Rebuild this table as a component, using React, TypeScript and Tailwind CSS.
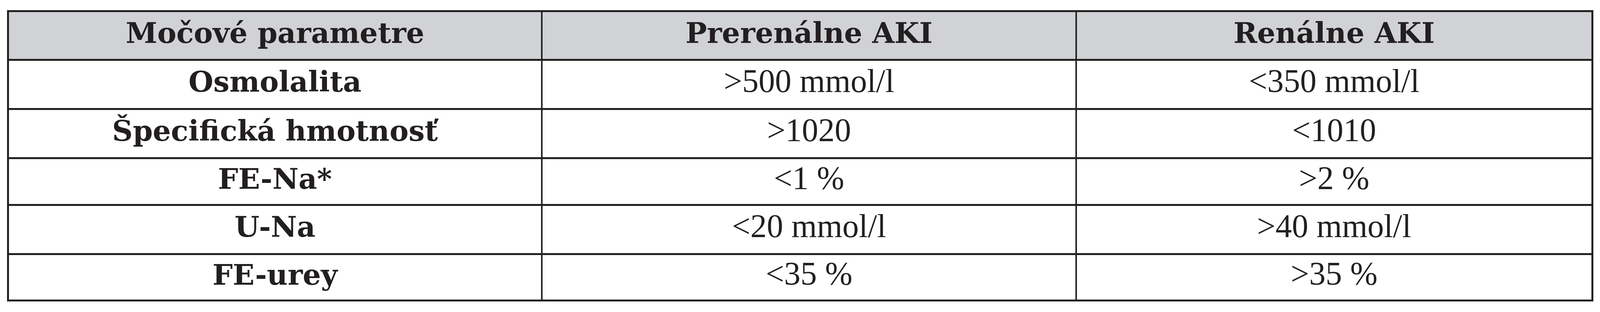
const headers = ['Močové parametre', 'Prerenálne AKI', 'Renálne AKI'];

// row heights include the 5px bottom rule (box-sizing: border-box)
const rows = [
  { name: 'Osmolalita', pre: '>500 mmol/l', ren: '<350 mmol/l', h: 'h-[126px]' },
  { name: 'Špecifická hmotnosť', pre: '>1020', ren: '<1010', h: 'h-[126px]' },
  { name: 'FE-Na*', pre: '<1 %', ren: '>2 %', h: 'h-[120px]' },
  { name: 'U-Na', pre: '<20 mmol/l', ren: '>40 mmol/l', h: 'h-[126px]' },
  { name: 'FE-urey', pre: '<35 %', ren: '>35 %', h: 'h-[114px]' },
];

// type scales with the page width so the table keeps its proportions
const boldCell =
  "flex items-center justify-center min-h-0 pb-[0.19em] font-bold leading-none whitespace-nowrap text-[1.785vw] font-['DejaVu_Serif',serif]";
const plainCell =
  "flex items-center justify-center min-h-0 pb-[0.21em] leading-none whitespace-nowrap text-[2.05vw] font-['Liberation_Serif',serif]";

export default function App() {
  return (
    <div className="w-full h-[800px] overflow-hidden bg-white pt-[26px] text-[#231f20]">
      <div className="ml-[0.43%] w-[99.15%] border-[5px] border-[#222222]">
        {/* Header */}
        <div className="grid grid-cols-[1646fr_1647fr_1586fr] grid-rows-[100%] h-[125px] border-b-[5px] border-[#222222] bg-[#d1d2d5]">
          {headers.map((h, i) => (
            <div
              key={h}
              className={`${boldCell} ${i < 2 ? 'border-r-4 border-[#222222]' : ''}`}
            >
              {h}
            </div>
          ))}
        </div>

        {/* Body */}
        {rows.map((r, i) => (
          <div
            key={r.name}
            className={`grid grid-cols-[1646fr_1647fr_1586fr] grid-rows-[100%] ${r.h} ${
              i < rows.length - 1 ? 'border-b-[5px] border-[#222222]' : ''
            }`}
          >
            <div className={`${boldCell} border-r-4 border-[#222222]`}>{r.name}</div>
            <div className={`${plainCell} border-r-4 border-[#222222]`}>{r.pre}</div>
            <div className={plainCell}>{r.ren}</div>
          </div>
        ))}
      </div>
    </div>
  );
}
